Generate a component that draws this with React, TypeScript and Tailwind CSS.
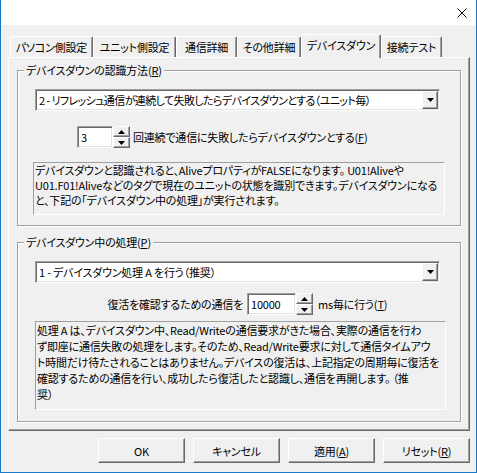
import React from 'react';

const sunken =
  'border border-t-[#a0a0a0] border-l-[#a0a0a0] border-r-white border-b-white shadow-[inset_1px_1px_0_#696969,inset_-1px_-1px_0_#e3e3e3]';
const raised =
  'border border-t-white border-l-white border-r-[#696969] border-b-[#696969] shadow-[inset_-1px_-1px_0_#a0a0a0] bg-[#f0f0f0]';

function Tri({ up = false }: { up?: boolean }) {
  return (
    <svg width="7" height="4" viewBox="0 0 7 4">
      <polygon points={up ? '3.5,0 7,4 0,4' : '0,0 7,0 3.5,4'} fill="#000" />
    </svg>
  );
}

function Combo({ text, tight = false }: { text: string; tight?: boolean }) {
  return (
    <div className={`flex items-center w-[405px] h-[22px] bg-white pl-[3px] pr-[1px] ${sunken}`}>
      <span className={`flex-1 whitespace-nowrap ${tight ? 'tracking-[-0.6px]' : ''}`}>{text}</span>
      <span className={`w-[16px] h-[18px] flex items-center justify-center ${raised}`}>
        <Tri />
      </span>
    </div>
  );
}

function Spin({ value, width }: { value: string; width: string }) {
  return (
    <div className="flex h-[22px]">
      <div className={`${width} h-full bg-white pl-[3px] flex items-center ${sunken}`}>{value}</div>
      <div className="w-[17px] h-full flex flex-col justify-between">
        <span className={`h-[11px] flex items-center justify-center ${raised}`}>
          <Tri up />
        </span>
        <span className={`h-[11px] flex items-center justify-center ${raised}`}>
          <Tri />
        </span>
      </div>
    </div>
  );
}

function Group({ label, className, children }: { label: React.ReactNode; className: string; children: React.ReactNode }) {
  return (
    <div className={`relative ml-[8px] w-[444px] border border-[#a0a0a0] shadow-[inset_1px_1px_0_#fff,1px_1px_0_#fff] ${className}`}>
      <span className="absolute -top-[8px] left-[6px] px-[2px] bg-[#f0f0f0] leading-[15px] whitespace-nowrap">{label}</span>
      {children}
    </div>
  );
}

const tabs = [
  { name: 'パソコン側設定', w: 'w-[83px]' },
  { name: 'ユニット側設定', w: 'w-[83px]' },
  { name: '通信詳細', w: 'w-[61px]' },
  { name: 'その他詳細', w: 'w-[64px]' },
  { name: 'デバイスダウン', w: 'w-[80px]', active: true },
  { name: '接続テスト', w: 'w-[61px]' },
];

export default function App() {
  return (
    <div className="w-[477px] h-[473px] flex flex-col border-l border-r border-b border-[#1979ca] bg-[#f0f0f0] text-[11px] leading-[16px] tracking-[-0.2px] text-black font-['Noto_Sans_CJK_JP',sans-serif] [font-feature-settings:'palt']">
      <div className="h-[25px] bg-white flex justify-end items-start">
        <svg width="10" height="10" viewBox="0 0 10 10" className="mt-[8px] mr-[9px]">
          <path d="M0.5 0.5 L9.5 9.5 M9.5 0.5 L0.5 9.5" stroke="#000" strokeWidth="1" />
        </svg>
      </div>

      <div className="pl-[7px]">
        <div className="mt-[9px] h-[23px] flex items-end pl-[2px]">
          {tabs.map((t) => (
            <div
              key={t.name}
              className={`${t.w} flex justify-center whitespace-nowrap rounded-t-[2px] border-t border-l border-r border-t-white border-l-white border-r-[#696969] shadow-[inset_-1px_0_0_#a0a0a0] ${
                t.active ? 'h-[24px] -mb-[1px] relative z-10 bg-[#f0f0f0] pt-[2px]' : 'h-[21px] pt-[2px]'
              }`}
            >
              {t.name}
            </div>
          ))}
        </div>

        <div className="w-[462px] h-[374px] border border-t-white border-l-white border-r-[#696969] border-b-[#696969] shadow-[inset_-1px_-1px_0_#a0a0a0]">
          <Group
            className="mt-[12px] h-[156px]"
            label={
              <>
                デバイスダウンの認識方法(<u>R</u>)
              </>
            }
          >
            <div className="mt-[18px] ml-[17px]">
              <Combo tight text="2 - リフレッシュ通信が連続して失敗したらデバイスダウンとする（ユニット毎）" />
            </div>
            <div className="mt-[15px] ml-[59px] flex items-center">
              <Spin value="3" width="w-[36px]" />
              <span className="ml-[3px] whitespace-nowrap">
                回連続で通信に失敗したらデバイスダウンとする(<u>F</u>)
              </span>
            </div>
            <div className="mt-[14px] ml-[15px] w-[412px] h-[53px] border border-t-[#a0a0a0] border-l-[#a0a0a0] border-r-white border-b-white pl-[1px] leading-[15px] whitespace-nowrap overflow-hidden">
              デバイスダウンと認識されると、AliveプロパティがFALSEになります。 U01!Aliveや
              <br />
              U01.F01!Aliveなどのタグで現在のユニットの状態を識別できます。デバイスダウンになる
              <br />
              と、下記の「デバイスダウン中の処理」が実行されます。
            </div>
          </Group>

          <Group
            className="mt-[16px] h-[180px]"
            label={
              <>
                デバイスダウン中の処理(<u>P</u>)
              </>
            }
          >
            <div className="mt-[18px] ml-[17px]">
              <Combo text="1 - デバイスダウン処理 A を行う（推奨）" />
            </div>
            <div className="mt-[10px] flex items-center">
              <span className="w-[225px] text-right whitespace-nowrap">復活を確認するための通信を</span>
              <div className="ml-[4px]">
                <Spin value="10000" width="w-[49px]" />
              </div>
              <span className="ml-[5px] whitespace-nowrap">
                ms毎に行う(<u>T</u>)
              </span>
            </div>
            <div className="mt-[6px] ml-[17px] w-[411px] h-[89px] border border-t-[#a0a0a0] border-l-[#a0a0a0] border-r-white border-b-white pl-[1px] leading-[16px] whitespace-nowrap overflow-hidden">
              処理 A は、デバイスダウン中、Read/Writeの通信要求がきた場合、実際の通信を行わ
              <br />
              ず即座に通信失敗の処理をします。そのため、Read/Write要求に対して通信タイムアウ
              <br />
              ト時間だけ待たされることはありません。デバイスの復活は、上記指定の周期毎に復活を
              <br />
              確認するための通信を行い、成功したら復活したと認識し、通信を再開します。 （推
              <br />
              奨）
            </div>
          </Group>
        </div>
      </div>

      <div className="mt-[7px] flex justify-end gap-[8px] pr-[6px]">
        {[
          <>OK</>,
          <>キャンセル</>,
          <>
            適用(<u>A</u>)
          </>,
          <>
            リセット(<u>R</u>)
          </>,
        ].map((b, i) => (
          <button key={i} className={`w-[87px] h-[25px] flex items-center justify-center ${raised}`}>
            {b}
          </button>
        ))}
      </div>
    </div>
  );
}
